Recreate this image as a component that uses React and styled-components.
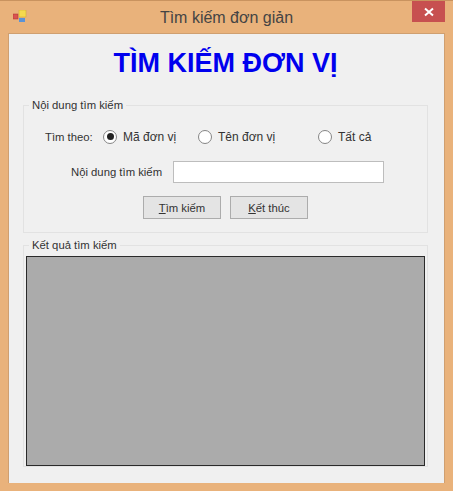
import styled, { createGlobalStyle } from "styled-components";

const Global = createGlobalStyle`
  html, body {
    margin: 0;
    padding: 0;
    background: #e9b27b;
  }
`;

const Window = styled.div`
  width: 453px;
  height: 491px;
  box-sizing: border-box;
  padding: 0 8px 8px;
  display: flex;
  flex-direction: column;
  background: #e9b27b;
  border-top: 1px solid #c9935f;
  font-family: "Liberation Sans", Arial, sans-serif;
  font-size: 12px;
  color: #333;
  overflow: hidden;
`;

const TitleBar = styled.div`
  height: 32px;
  flex: none;
  display: flex;
  align-items: flex-start;
  position: relative;
`;

const AppIcon = styled.svg`
  width: 14px;
  height: 14px;
  margin: 9px 0 0 5px;
`;

const TitleText = styled.div`
  position: absolute;
  left: 0;
  right: 0;
  top: 7px;
  text-align: center;
  font-size: 16px;
  line-height: 19px;
  color: #444;
`;

const CloseButton = styled.div`
  position: absolute;
  right: 0;
  top: 0;
  width: 33px;
  height: 21px;
  background: #c75050;
  display: flex;
  align-items: center;
  justify-content: center;
`;

const Client = styled.div`
  flex: 1;
  background: #f0f0f0;
  border: 1px solid #cf9f70;
  border-bottom: none;
  box-sizing: border-box;
  padding: 0 16px 0 14px;
  display: flex;
  flex-direction: column;
`;

const Heading = styled.h1`
  margin: 13px 0 0;
  height: 33px;
  line-height: 33px;
  text-align: center;
  font-size: 27px;
  font-weight: bold;
  color: #0000ee;
`;

const Group = styled.fieldset`
  margin: ${(p) => p.$top}px 0 0;
  padding: 0;
  border: 1px solid #e2e2e2;
  height: ${(p) => p.$height}px;
  box-sizing: border-box;
  min-width: 0;
`;

const GroupTitle = styled.legend`
  margin-left: 5px;
  padding: 0 3px;
  font-size: 11.3px;
  line-height: 14px;
  color: #333;
`;

const SearchRow = styled.div`
  display: grid;
  grid-template-columns: 58px 95px 120px auto;
  padding: 17px 0 0 21px;
  height: 15px;
  align-items: center;
`;

const SearchLabel = styled.span`
  font-size: 11.3px;
`;

const Option = styled.label`
  display: flex;
  align-items: center;
  gap: 6px;
`;

const Radio = styled.span`
  width: 14px;
  height: 14px;
  box-sizing: border-box;
  border: 1.5px solid #858585;
  border-radius: 50%;
  background: #fff;
  display: flex;
  align-items: center;
  justify-content: center;
  &::after {
    content: "";
    width: 7px;
    height: 7px;
    border-radius: 50%;
    background: ${(p) => (p.$on ? "#222" : "transparent")};
  }
`;

const InputRow = styled.div`
  display: flex;
  align-items: center;
  padding: 17px 0 0 47px;
`;

const InputLabel = styled.span`
  width: 102px;
  font-size: 11.3px;
`;

const TextBox = styled.div`
  width: 211px;
  height: 22px;
  box-sizing: border-box;
  background: #fff;
  border: 1px solid #bdbdbd;
`;

const ButtonRow = styled.div`
  display: flex;
  gap: 9px;
  padding: 13px 0 0 119px;
`;

const Button = styled.div`
  width: 78px;
  height: 23px;
  box-sizing: border-box;
  background: #e4e4e4;
  border: 1px solid #acacac;
  font-size: 11.3px;
  display: flex;
  align-items: center;
  justify-content: center;
`;

const Key = styled.span`
  text-decoration: underline;
`;

const Grid = styled.div`
  margin: 4px 2px 0;
  height: 210px;
  box-sizing: border-box;
  background: #ababab;
  border: 1px solid #2a2a2a;
`;

export default function App() {
  return (
    <>
      <Global />
      <Window>
        <TitleBar>
          <AppIcon viewBox="0 0 14 14">
            <rect x="0" y="4" width="5" height="5" fill="#d9534f" stroke="#a33" strokeWidth="0.5" />
            <rect x="6" y="0" width="7" height="7" fill="#f5d94e" stroke="#c9a92e" strokeWidth="0.5" />
            <rect x="6" y="8" width="6" height="4" fill="#5b93d6" />
          </AppIcon>
          <TitleText>Tìm kiếm đơn giản</TitleText>
          <CloseButton>
            <svg width="10" height="10" viewBox="0 0 10 10">
              <path d="M1 1.5 L9 8.5 M9 1.5 L1 8.5" stroke="#fff" strokeWidth="2" />
            </svg>
          </CloseButton>
        </TitleBar>
        <Client>
          <Heading>TÌM KIẾM ĐƠN VỊ</Heading>
          <Group $top={18} $height={135}>
            <GroupTitle>Nội dung tìm kiếm</GroupTitle>
            <SearchRow>
              <SearchLabel>Tìm theo:</SearchLabel>
              <Option>
                <Radio $on />
                Mã đơn vị
              </Option>
              <Option>
                <Radio />
                Tên đơn vị
              </Option>
              <Option>
                <Radio />
                Tất cả
              </Option>
            </SearchRow>
            <InputRow>
              <InputLabel>Nội dung tìm kiếm</InputLabel>
              <TextBox />
            </InputRow>
            <ButtonRow>
              <Button>
                <span>
                  <Key>T</Key>ìm kiếm
                </span>
              </Button>
              <Button>
                <span>
                  <Key>K</Key>ết thúc
                </span>
              </Button>
            </ButtonRow>
          </Group>
          <Group $top={5} $height={229}>
            <GroupTitle>Kết quả tìm kiếm</GroupTitle>
            <Grid />
          </Group>
        </Client>
      </Window>
    </>
  );
}
